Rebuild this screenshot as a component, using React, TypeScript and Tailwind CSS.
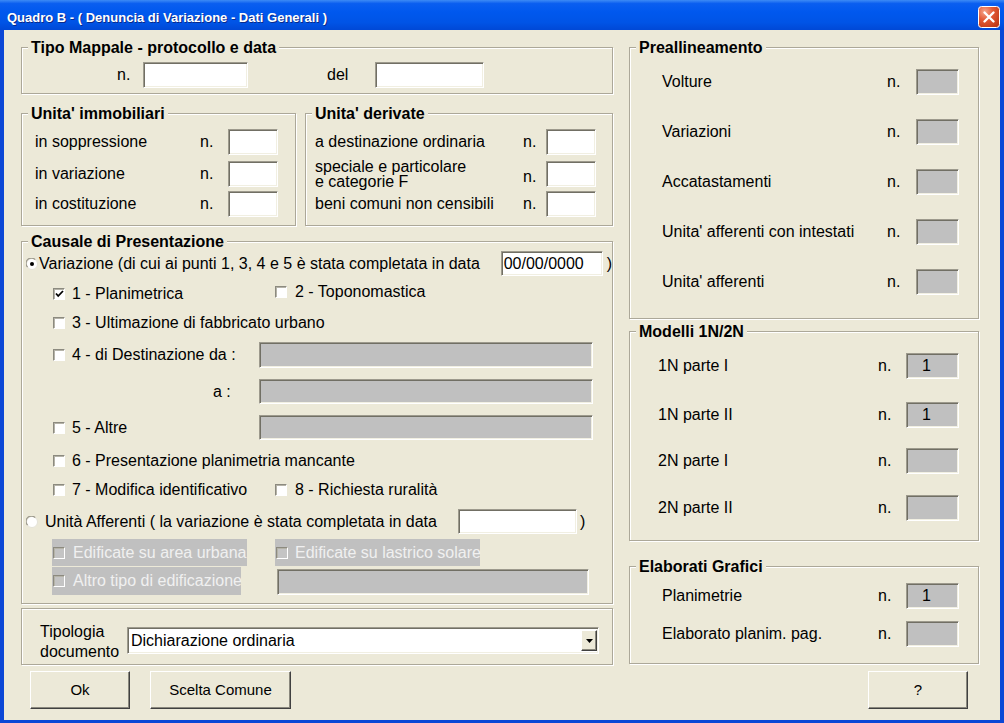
import React from 'react';

// XP style sunken edit box
const sunken =
  'border border-t-[#9d9a8d] border-l-[#9d9a8d] border-b-white border-r-white shadow-[inset_1px_1px_0_#716f64,inset_-1px_-1px_0_#f1efe2]';
const raised =
  'border border-t-white border-l-white border-b-[#404040] border-r-[#404040] shadow-[inset_-1px_-1px_0_#8a887d]';

function Group({ title, className = '', children }: { title?: string; className?: string; children?: React.ReactNode }) {
  return (
    <div className={`border border-[#aca899] shadow-[inset_1px_1px_0_#fff,1px_1px_0_#fff] ${className}`}>
      {title && (
        <div className="-mt-[9px] ml-[6px] h-[18px] w-fit bg-[#ece9d8] px-[3px] text-[16px] font-bold leading-[18px]">
          {title}
        </div>
      )}
      {children}
    </div>
  );
}

function Field({ className, gray, value }: { className: string; gray?: boolean; value?: string }) {
  return (
    <div className={`flex shrink-0 items-center ${sunken} ${gray ? 'bg-[#c0c0c0]' : 'bg-white'} ${className}`}>
      {value}
    </div>
  );
}

function Check({ checked, disabled }: { checked?: boolean; disabled?: boolean }) {
  return (
    <span
      className={`inline-flex h-[12px] w-[12px] shrink-0 items-center justify-center border border-t-[#8c8a7f] border-l-[#8c8a7f] border-b-white border-r-white shadow-[inset_1px_1px_0_#b5b3a8] ${
        disabled ? 'bg-[#c4c4c4]' : 'bg-white'
      }`}
    >
      {checked && (
        <svg width="9" height="8" viewBox="0 0 9 8">
          <path d="M1 3.5 L3.2 6 L8 1" fill="none" stroke="#000" strokeWidth="1.8" />
        </svg>
      )}
    </span>
  );
}

function Radio({ checked }: { checked?: boolean }) {
  return (
    <svg width="12" height="12" viewBox="0 0 12 12" className="shrink-0">
      <circle cx="6" cy="6" r="5.5" fill="#fff" stroke="#e4e2d8" strokeWidth="1" />
      <path d="M1.6 9.2 A5.2 5.2 0 0 1 9.2 1.6" fill="none" stroke="#9d9a8d" strokeWidth="1.2" />
      {checked && <circle cx="6" cy="6" r="2" fill="#000" />}
    </svg>
  );
}

function CloseIcon() {
  return (
    <svg width="22" height="22" viewBox="0 0 22 22" className="ml-auto shrink-0">
      <defs>
        <radialGradient id="xpclose" cx="30%" cy="25%" r="85%">
          <stop offset="0%" stopColor="#f5a68c" />
          <stop offset="45%" stopColor="#e35b37" />
          <stop offset="100%" stopColor="#c13a17" />
        </radialGradient>
      </defs>
      <rect x="0.5" y="0.5" width="21" height="21" rx="3" fill="url(#xpclose)" stroke="#fff" />
      <path d="M6.5 6.5 L15.5 15.5 M15.5 6.5 L6.5 15.5" stroke="#fff" strokeWidth="2.4" strokeLinecap="round" />
    </svg>
  );
}

function Button({ className, children }: { className: string; children: React.ReactNode }) {
  return (
    <div className={`flex items-center justify-center bg-[#ece9d8] text-[15px] ${raised} ${className}`}>{children}</div>
  );
}

const prealline = ['Volture', 'Variazioni', 'Accatastamenti', "Unita' afferenti con intestati", "Unita' afferenti"];

export default function App() {
  return (
    <div className="flex h-[723px] w-[1004px] flex-col overflow-hidden font-['Liberation_Sans',Arial,sans-serif] text-[16px] text-black">
      {/* Title bar */}
      <div className="flex h-[30px] shrink-0 items-center bg-[linear-gradient(to_bottom,#3d8bf5_0%,#0a5ef0_12%,#0058ee_40%,#0054e6_75%,#0048d6_100%)] pl-[7px] pr-[4px] pt-[3px]">
        <span className="mt-[2px] text-[13px] font-bold text-white [text-shadow:1px_1px_0_#0a2a8a]">
          Quadro B - ( Denuncia di Variazione - Dati Generali )
        </span>
        <CloseIcon />
      </div>

      <div className="flex flex-1 border-b-[3px] border-l-4 border-r-4 border-[#0b47d6] bg-[#ece9d8] pl-[17px]">
        {/* Left column */}
        <div className="flex w-[592px] flex-col pt-[17px]">
          <Group title="Tipo Mappale - protocollo e data" className="h-[47px]">
            <div className="mt-[5px] flex h-[26px] items-center">
              <span className="ml-[95px] w-[26px]">n.</span>
              <Field className="h-[26px] w-[105px]" />
              <span className="ml-[79px] w-[48px]">del</span>
              <Field className="h-[26px] w-[109px]" />
            </div>
          </Group>

          <div className="mt-[19px] flex gap-[9px]">
            <Group title="Unita' immobiliari" className="h-[113px] w-[275px]">
              {[
                ['in soppressione', 'mt-[6px]'],
                ['in variazione', 'mt-[6px]'],
                ['in costituzione', 'mt-[4px]'],
              ].map(([label, mt]) => (
                <div key={label} className={`flex h-[26px] items-center ${mt}`}>
                  <span className="ml-[13px] w-[165px]">{label}</span>
                  <span className="w-[28px]">n.</span>
                  <Field className="h-[26px] w-[50px]" />
                </div>
              ))}
            </Group>
            <Group title="Unita' derivate" className="h-[113px] w-[308px]">
              <div className="mt-[6px] flex h-[26px] items-center">
                <span className="ml-[9px] w-[208px]">a destinazione ordinaria</span>
                <span className="w-[23px]">n.</span>
                <Field className="h-[26px] w-[50px]" />
              </div>
              <div className="mt-[6px] flex h-[26px] items-center">
                <span className="ml-[9px] w-[208px] leading-[15px]">
                  speciale e particolare
                  <br />e categorie F
                </span>
                <span className="mt-[5px] w-[23px]">n.</span>
                <Field className="h-[26px] w-[50px]" />
              </div>
              <div className="mt-[4px] flex h-[26px] items-center">
                <span className="ml-[9px] w-[208px]">beni comuni non censibili</span>
                <span className="w-[23px]">n.</span>
                <Field className="h-[26px] w-[50px]" />
              </div>
            </Group>
          </div>

          <Group title="Causale di Presentazione" className="mt-[15px] h-[363px]">
            <div className="flex h-[25px] items-center pl-[4px]">
              <Radio checked />
              <span className="ml-[1px] w-[463px] whitespace-nowrap">
                Variazione (di cui ai punti 1, 3, 4 e 5 è stata completata in data
              </span>
              <Field className="h-[25px] w-[102px] pl-[2px]" value="00/00/0000" />
              <span className="ml-[4px]">)</span>
            </div>

            <div className="mt-[8px] flex h-[20px] items-center">
              <div className="ml-[31px] flex w-[222px] items-center">
                <Check checked />
                <span className="ml-[7px]">1 - Planimetrica</span>
              </div>
              <div className="mb-[5px] flex items-center">
                <Check />
                <span className="ml-[8px]">2 - Toponomastica</span>
              </div>
            </div>

            <div className="mt-[9px] flex h-[20px] items-center">
              <div className="ml-[31px] flex items-center">
                <Check />
                <span className="ml-[7px]">3 - Ultimazione di fabbricato urbano</span>
              </div>
            </div>

            <div className="mt-[9px] flex h-[26px] items-center">
              <div className="ml-[31px] flex w-[206px] items-center">
                <Check />
                <span className="ml-[7px]">4 - di Destinazione da :</span>
              </div>
              <Field gray className="h-[26px] w-[334px]" />
            </div>

            <div className="mt-[11px] flex h-[25px] items-center">
              <span className="ml-[31px] w-[206px] pl-[160px]">a :</span>
              <Field gray className="h-[25px] w-[334px]" />
            </div>

            <div className="mt-[11px] flex h-[25px] items-center">
              <div className="ml-[31px] flex w-[206px] items-center">
                <Check />
                <span className="ml-[7px]">5 - Altre</span>
              </div>
              <Field gray className="h-[25px] w-[334px]" />
            </div>

            <div className="mt-[11px] flex h-[20px] items-center">
              <div className="ml-[31px] flex items-center">
                <Check />
                <span className="ml-[7px]">6 - Presentazione planimetria mancante</span>
              </div>
            </div>

            <div className="mt-[9px] flex h-[20px] items-center">
              <div className="ml-[31px] flex w-[222px] items-center">
                <Check />
                <span className="ml-[7px]">7 - Modifica identificativo</span>
              </div>
              <div className="flex items-center">
                <Check />
                <span className="ml-[8px]">8 - Richiesta ruralità</span>
              </div>
            </div>

            <div className="mt-[9px] flex h-[25px] items-center pl-[4px]">
              <Radio />
              <span className="ml-[7px] w-[413px] whitespace-nowrap">
                Unità Afferenti ( la variazione è stata completata in data
              </span>
              <Field className="h-[25px] w-[119px]" />
              <span className="ml-[3px]">)</span>
            </div>

            <div className="mt-[5px] flex h-[27px] items-stretch">
              <div className="ml-[30px] flex w-[195px] items-center bg-[#c0c0c0] text-[#f0f0f0]">
                <span className="ml-[1px] flex">
                  <Check disabled />
                </span>
                <span className="ml-[8px] whitespace-nowrap">Edificate su area urbana</span>
              </div>
              <div className="ml-[28px] flex w-[205px] items-center bg-[#c0c0c0] text-[#f0f0f0]">
                <span className="ml-[1px] flex">
                  <Check disabled />
                </span>
                <span className="ml-[7px] whitespace-nowrap">Edificate su lastrico solare</span>
              </div>
            </div>

            <div className="mt-[1px] flex h-[28px] items-stretch">
              <div className="ml-[30px] flex w-[189px] items-center bg-[#c0c0c0] text-[#f0f0f0]">
                <span className="ml-[1px] flex">
                  <Check disabled />
                </span>
                <span className="ml-[8px] whitespace-nowrap">Altro tipo di edificazione</span>
              </div>
              <Field gray className="ml-[36px] h-[26px] w-[312px] self-end" />
            </div>
          </Group>

          <Group className="mt-[4px] h-[57px]">
            <div className="mt-[13px] flex items-start">
              <div className="ml-[18px] w-[87px] leading-[20px]">
                Tipologia
                <br />
                documento
              </div>
              <div className={`mt-[5px] flex h-[27px] w-[472px] items-center bg-white ${sunken}`}>
                <span className="ml-[3px] flex-1">Dichiarazione ordinaria</span>
                <div className={`mr-[1px] flex h-[21px] w-[16px] items-center justify-center bg-[#ece9d8] ${raised}`}>
                  <svg width="7" height="4" viewBox="0 0 7 4">
                    <path d="M0 0 H7 L3.5 4 Z" fill="#000" />
                  </svg>
                </div>
              </div>
            </div>
          </Group>

          <div className="mt-[6px] flex">
            <Button className="ml-[9px] h-[38px] w-[100px]">Ok</Button>
            <Button className="ml-[20px] h-[38px] w-[141px]">Scelta Comune</Button>
          </div>
        </div>

        {/* Right column */}
        <div className="ml-[16px] flex w-[350px] flex-col pt-[17px]">
          <Group title="Preallineamento" className="h-[272px]">
            {prealline.map((label, i) => (
              <div key={label} className={`flex h-[26px] items-center ${i === 0 ? 'mt-[12px]' : 'mt-[24px]'}`}>
                <span className="ml-[32px] w-[225px]">{label}</span>
                <span className="w-[29px]">n.</span>
                <Field gray className="h-[26px] w-[43px]" />
              </div>
            ))}
          </Group>

          <Group title="Modelli 1N/2N" className="mt-[12px] h-[210px]">
            {[
              ['1N parte I', 'mt-[12px]', '1'],
              ['1N parte II', 'mt-[23px]', '1'],
              ['2N parte I', 'mt-[20px]', ''],
              ['2N parte II', 'mt-[21px]', ''],
            ].map(([label, mt, v]) => (
              <div key={label} className={`flex h-[26px] items-center ${mt}`}>
                <span className="ml-[28px] w-[220px]">{label}</span>
                <span className="w-[28px]">n.</span>
                <Field gray className="h-[26px] w-[53px] pl-[15px]" value={v} />
              </div>
            ))}
          </Group>

          <Group title="Elaborati Grafici" className="mt-[25px] h-[98px]">
            <div className="mt-[7px] flex h-[26px] items-center">
              <span className="ml-[32px] w-[216px]">Planimetrie</span>
              <span className="w-[28px]">n.</span>
              <Field gray className="h-[26px] w-[53px] pl-[15px]" value="1" />
            </div>
            <div className="mt-[12px] flex h-[26px] items-center">
              <span className="ml-[32px] w-[216px]">Elaborato planim. pag.</span>
              <span className="w-[28px]">n.</span>
              <Field gray className="h-[26px] w-[53px]" />
            </div>
          </Group>

          <Button className="ml-[239px] mt-[7px] h-[38px] w-[100px]">?</Button>
        </div>
      </div>
    </div>
  );
}
